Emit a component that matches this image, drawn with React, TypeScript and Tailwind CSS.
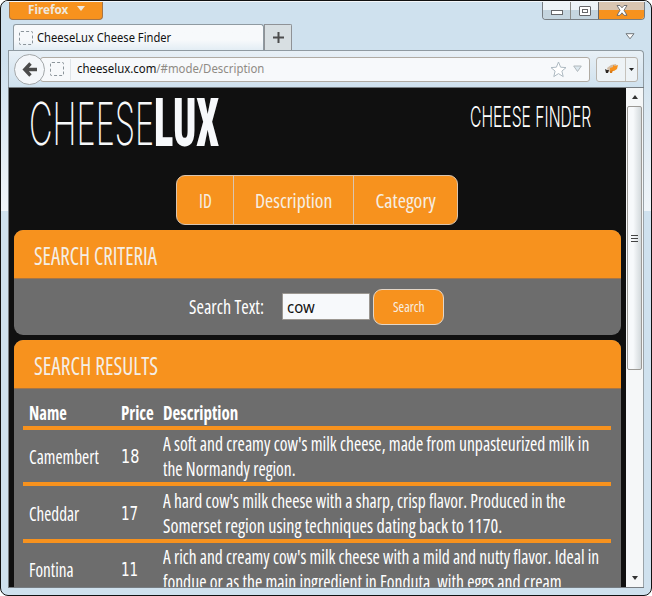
import React, { useLayoutEffect, useRef, useState } from 'react';

/* Condensed lettering: squeezes a line horizontally to the width of its box. */
function Fit({ className, children }: { className: string; children: React.ReactNode }) {
  const box = useRef<HTMLSpanElement>(null);
  const ink = useRef<HTMLSpanElement>(null);
  const [scale, setScale] = useState(1);
  useLayoutEffect(() => {
    if (box.current && ink.current) setScale(box.current.clientWidth / ink.current.offsetWidth);
  }, []);
  return (
    <span ref={box} className={`block shrink-0 ${className}`}>
      <span ref={ink} className="inline-block origin-left whitespace-nowrap" style={{ transform: `scaleX(${scale})` }}>
        {children}
      </span>
    </span>
  );
}

function Placeholder({ className }: { className: string }) {
  return <span className={`block shrink-0 rounded-[2px] border border-dashed border-[#8c959b] ${className}`} />;
}

function Titlebar() {
  return (
    <div className="flex h-[23px] shrink-0 items-start justify-between border-t border-[#f4f7fa] pl-2 pr-[6px]">
      <div className="flex h-[18px] w-[94px] items-center overflow-hidden rounded-b-[4px] border border-t-0 border-[#a57548] bg-[#f7921e] pb-[2px] pl-[18px] font-['Noto_Sans'] text-[12px] font-bold leading-none text-[#eee8df]">
        <Fit className="w-[40px]">Firefox</Fit>
        <svg className="mb-[2px] ml-[9px] h-[5px] w-[8px]" viewBox="0 0 8 5"><path d="M0 0h8L4 5z" fill="#eee8df" /></svg>
      </div>
      <div className="flex h-[18px] w-[103px] overflow-hidden rounded-b-[4px] border border-t-0 border-[#777d82] bg-[#dce7ef]">
        <div className="flex w-[28px] items-center justify-center border-r border-[#8b8b88] bg-gradient-to-b from-[#edf3f7] from-50% to-[#c5d5df] to-50%">
          <span className="mt-[4px] h-[5px] w-[12px] border border-[#66676a] bg-white" />
        </div>
        <div className="flex w-[28px] items-center justify-center border-r border-[#66676a] bg-gradient-to-b from-[#edf3f7] from-50% to-[#c5d5df] to-50%">
          <span className="flex h-[10px] w-[12px] items-center justify-center rounded-[1px] border border-[#66676a] bg-white">
            <span className="h-[4px] w-[6px] border border-[#66676a]" />
          </span>
        </div>
        <div className="flex flex-1 items-center justify-center bg-gradient-to-b from-[#d9c5b1] from-45% to-[#f7921e] to-45%">
          <svg className="h-[11px] w-[12px]" viewBox="0 0 12 11"><path d="M1 .5h3l2 2.3L8 .5h3L8 5.3l3 5H8L6 7.8l-2 2.5H1l3-5z" fill="#fff" stroke="#66676a" strokeWidth=".9" /></svg>
        </div>
      </div>
    </div>
  );
}

function Tabs() {
  return (
    <div className="flex h-[26px] shrink-0 items-end pl-[12px]">
      <div className="flex h-[26px] w-[251px] items-center rounded-t-[3px] border border-b-0 border-[#8f9aa1] bg-gradient-to-b from-[#f7f9fb] from-60% to-[#e3edf4] pl-[5px]">
        <Placeholder className="h-[14px] w-[14px]" />
        <div className="ml-[4px] font-['Noto_Sans'] text-[12px] leading-none text-[#111]"><Fit className="w-[134px]">CheeseLux Cheese Finder</Fit></div>
      </div>
      <div className="flex h-[26px] w-[28px] items-center justify-center rounded-tr-[2px] border border-b-0 border-[#8f9296] bg-[#d8dfe2]">
        <svg className="h-[11px] w-[11px]" viewBox="0 0 11 11"><path d="M5.500 0v11M0 5.500h11" stroke="#4d4d4d" strokeWidth="2" /></svg>
      </div>
      <svg className="mb-[10px] ml-[333px] h-[7px] w-[10px]" viewBox="0 0 10 7"><path d="M1 .7h8L5 5.800z" fill="#fff" stroke="#72777b" /></svg>
    </div>
  );
}

function Toolbar() {
  return (
    <div className="ml-[7px] mr-[7px] flex h-[37px] shrink-0 items-center rounded-tr-[4px] border-l border-r border-t border-[#8f9aa1] bg-gradient-to-b from-[#e8f0f6] to-[#cfe1ee] pl-[5px]">
      <div className="z-10 flex h-[31px] w-[31px] shrink-0 items-center justify-center rounded-full border border-[#a3a7a9] bg-[#f4f7fa]">
        <svg className="h-[15px] w-[16px]" viewBox="0 0 16 15"><path d="M8.500 1.500 2.800 7.500l5.700 6M3 7.500h12" fill="none" stroke="#4c4c4c" strokeWidth="3.400" /></svg>
      </div>
      <div className="-ml-[5px] flex h-[25px] w-[550px] shrink-0 items-center rounded-[3px] border border-[#b0aba3] bg-[#f7f9fb] pl-[9px]">
        <Placeholder className="h-[14px] w-[14px]" />
        <span className="ml-[6px] h-[21px] w-px bg-[#dfe5e9]" />
        <div className="ml-[6px] font-['Noto_Sans'] text-[12px] leading-none text-[#8f8b85]">
          <Fit className="w-[187px]"><span className="text-[#111]">cheeselux.com</span>/#mode/Description</Fit>
        </div>
        <svg className="ml-[286px] h-[17px] w-[17px] shrink-0" viewBox="0 0 17 17"><path d="m8.500 1 2.100 5.200 5.400.4-4.100 3.500 1.300 5.500-4.700-3-4.700 3 1.300-5.500L1 6.600l5.400-.4z" fill="#fff" stroke="#adb9c1" /></svg>
        <svg className="ml-[6px] h-[8px] w-[9px] shrink-0" viewBox="0 0 9 8"><path d="M.7 1h7.600L4.500 6.500z" fill="#dce8ef" stroke="#b1b8bc" /></svg>
      </div>
      <div className="ml-[6px] flex h-[25px] w-[42px] shrink-0 items-center rounded-[3px] border border-[#b7b3ad] bg-[#eef3f6]">
        <svg className="ml-[6px] h-[15px] w-[17px]" viewBox="0 0 17 15">
          <path d="m4 6 4-3 5-1 1 3-4 4-5 1z" fill="#d1bda7" />
          <path d="m7 6 3-1 0-2 2 1 3-1-1 4-3 2-4 0z" fill="#f7921e" />
          <path d="m2 7 2 1 2 0-1 3-2 0z" fill="#2d2825" /><path d="m7 9 3-1-1 3H7z" fill="#d87917" />
        </svg>
        <span className="ml-[5px] h-[23px] w-px bg-[#c6c3bd]" />
        <svg className="ml-[3px] h-[3px] w-[5px]" viewBox="0 0 5 3"><path d="M0 0h5L2.500 3z" fill="#222" /></svg>
      </div>
    </div>
  );
}

function Panel({ title, children, className }: { title: React.ReactNode; children: React.ReactNode; className: string }) {
  return (
    <section className={`shrink-0 overflow-hidden rounded-[9px] bg-[#6d6d6d] ${className}`}>
      <header className="flex h-[49px] items-center border-b border-[#a57548] bg-[#f7921e] pl-5 pt-[3px] text-[25px] font-normal leading-none text-[#f4eee6]">{title}</header>
      {children}
    </section>
  );
}

function Row({ name, price, lines }: { name: React.ReactNode; price: React.ReactNode; lines: React.ReactNode }) {
  return (
    <div className="flex h-[56.400px] items-center border-b-[4px] border-[#f7921e] pl-[6px]">
      <div className="w-[92px] pt-px">{name}</div>
      <div className="w-[41.500px] pt-px font-['DejaVu_Sans']">{price}</div>
      <div className="leading-[25px]">{lines}</div>
    </div>
  );
}

function Page() {
  return (
    <main className="flex w-[617px] flex-col overflow-hidden bg-[#101010] pl-[5px] pr-[5px] font-['Open_Sans'] font-stretch-75% text-white">
      <div className="flex h-[87px] shrink-0 items-start justify-between pl-[15px] pr-[30px] leading-none">
        <h1 className="flex items-start text-[#f7f9fb]">
          <Fit className="mt-[6px] w-[125px] font-['Inter'] text-[59px] font-extralight">CHEESE</Fit>
          <Fit className="mt-[3px] w-[65px] font-['Roboto'] text-[66px] font-black">LUX</Fit>
        </h1>
        <Fit className="mt-[15px] w-[121px] font-['Inter'] text-[28px] font-light">CHEESE FINDER</Fit>
      </div>
      <nav className="ml-[162px] flex h-[50px] w-[282px] shrink-0 overflow-hidden rounded-[9px] border border-[#d9c5b1] bg-[#f7921e] text-[20px] font-medium leading-none text-[#f6eee3]">
        <div className="flex w-[57px] items-center justify-center border-r border-[#d9c5b1] pt-[2px]"><Fit className="w-[13px]">ID</Fit></div>
        <div className="flex w-[120px] items-center justify-center border-r border-[#d9c5b1] pt-[2px]"><Fit className="w-[77px]">Description</Fit></div>
        <div className="flex flex-1 items-center justify-center pt-[2px]"><Fit className="w-[60px]">Category</Fit></div>
      </nav>
      <Panel className="mt-[5px] h-[105px]" title={<Fit className="w-[123px]">SEARCH CRITERIA</Fit>}>
        <div className="flex h-[55px] items-center pl-[175px]">
          <Fit className="w-[75px] text-[20px] leading-none">Search Text:</Fit>
          <div className="ml-[18px] flex h-[27px] w-[88px] items-center rounded-[1px] border border-[#9b9791] bg-[#f7f9fb] pl-[4px] font-['Noto_Sans'] text-[16px] leading-none text-[#111]"><Fit className="w-[28px]">cow</Fit></div>
          <button className="ml-[3px] flex h-[36px] w-[71px] items-center justify-center rounded-[9px] border border-[#e3d6c8] bg-[#f7921e] pt-px text-[14px] font-medium leading-none text-[#f6eee3]"><Fit className="w-[32px]">Search</Fit></button>
        </div>
      </Panel>
      <Panel className="mt-[5px] h-[280px]" title={<Fit className="w-[124px]">SEARCH RESULTS</Fit>}>
        <div className="pl-[9px] pr-[10px] text-[19.500px] leading-[25px]">
          <div className="flex h-[41px] items-end border-b-[4px] border-[#f7921e] pb-px pl-[6px] font-bold">
            <Fit className="mr-[54px] w-[38px]">Name</Fit><Fit className="mr-[9px] w-[32.500px]">Price</Fit><Fit className="w-[75px]">Description</Fit>
          </div>
          <Row name={<Fit className="w-[70px]">Camembert</Fit>} price={<Fit className="w-[18px]">18</Fit>} lines={<>
            <Fit className="w-[426px]">A soft and creamy cow's milk cheese, made from unpasteurized milk in</Fit>
            <Fit className="w-[133px]">the Normandy region.</Fit></>} />
          <Row name={<Fit className="w-[50px]">Cheddar</Fit>} price={<Fit className="w-[17px]">17</Fit>} lines={<>
            <Fit className="w-[402px]">A hard cow's milk cheese with a sharp, crisp flavor. Produced in the</Fit>
            <Fit className="w-[339px]">Somerset region using techniques dating back to 1170.</Fit></>} />
          <Row name={<Fit className="w-[45px]">Fontina</Fit>} price={<Fit className="w-[17px]">11</Fit>} lines={<>
            <Fit className="w-[436px]">A rich and creamy cow's milk cheese with a mild and nutty flavor. Ideal in</Fit>
            <Fit className="w-[399px]">fondue or as the main ingredient in Fonduta, with eggs and cream</Fit></>} />
        </div>
      </Panel>
    </main>
  );
}

function Scrollbar() {
  return (
    <div className="flex w-[18px] flex-col items-center border-r border-[#9aa3a9] bg-[#f5f7f8]">
      <div className="flex h-[18px] w-full shrink-0 items-center justify-center"><svg className="h-[4px] w-[6px]" viewBox="0 0 6 4"><path d="M0 4 3 0l3 4z" fill="#333" /></svg></div>
      <div className="flex h-[264px] w-[15px] shrink-0 flex-col items-center justify-center gap-[2px] rounded-[2px] border border-[#9b9995] bg-gradient-to-r from-[#f7f9fb] from-40% to-[#d3d9dc]">
        <i className="h-px w-[7px] bg-[#444]" /><i className="h-px w-[7px] bg-[#444]" /><i className="h-px w-[7px] bg-[#444]" />
      </div>
      <svg className="mb-[7px] mt-auto h-[4px] w-[6px]" viewBox="0 0 6 4"><path d="M0 0h6L3 4z" fill="#333" /></svg>
    </div>
  );
}

export default function App() {
  return (
    <div className="h-[596px] w-[652px] overflow-hidden bg-white">
      <div className="flex h-[596px] w-[652px] flex-col overflow-hidden rounded-[8px] border border-[#111] bg-[linear-gradient(to_bottom,#cfe1ee_0px,#cfe1ee_60px,#f0f5f9_210px,#cfe1ee_210px)]">
        <Titlebar />
        <Tabs />
        <Toolbar />
        <div className="ml-[7px] mr-[7px] flex h-[501px] shrink-0 border border-r-0 border-[#777d82]">
          <Page />
          <Scrollbar />
        </div>
      </div>
    </div>
  );
}
